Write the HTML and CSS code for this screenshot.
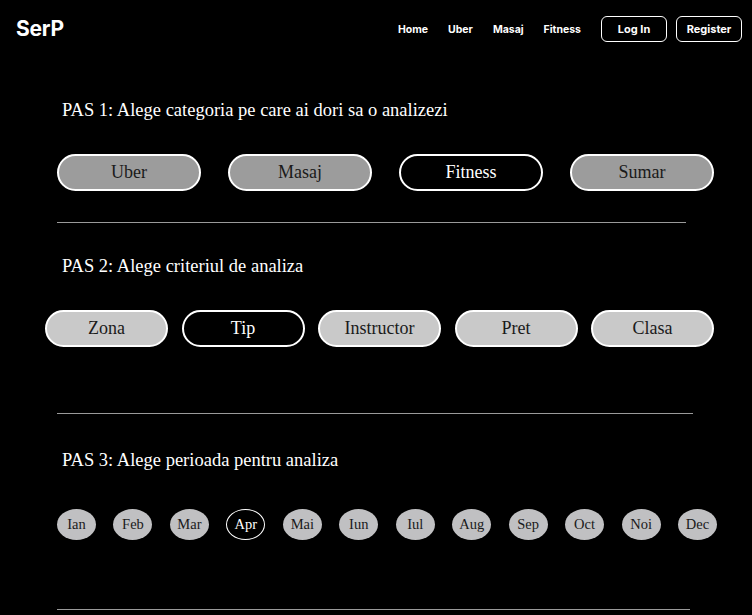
FILE: index.html
```html
<!DOCTYPE html>
<html lang="ro">
<head>
<meta charset="utf-8">
<title>SerP</title>
<link rel="stylesheet" href="styles.css">
</head>
<body>
<header class="topbar">
  <div class="logo">SerP</div>
  <nav class="nav">
    <a class="nav-link" href="#">Home</a>
    <a class="nav-link" href="#">Uber</a>
    <a class="nav-link" href="#">Masaj</a>
    <a class="nav-link" href="#">Fitness</a>
  </nav>
  <div class="auth">
    <a class="auth-btn" href="#">Log In</a>
    <a class="auth-btn" href="#">Register</a>
  </div>
</header>
<main class="content">
  <section class="step step-1">
    <h2 class="step-title">PAS 1: Alege categoria pe care ai dori sa o analizezi</h2>
    <div class="pills pills-cat">
      <button class="pill pill-cat">Uber</button>
      <button class="pill pill-cat">Masaj</button>
      <button class="pill pill-cat active">Fitness</button>
      <button class="pill pill-cat">Sumar</button>
    </div>
    <hr class="rule rule-1">
  </section>
  <section class="step step-2">
    <h2 class="step-title">PAS 2: Alege criteriul de analiza</h2>
    <div class="pills pills-crit">
      <button class="pill pill-crit">Zona</button>
      <button class="pill pill-crit active">Tip</button>
      <button class="pill pill-crit">Instructor</button>
      <button class="pill pill-crit">Pret</button>
      <button class="pill pill-crit">Clasa</button>
    </div>
    <hr class="rule rule-2">
  </section>
  <section class="step step-3">
    <h2 class="step-title">PAS 3: Alege perioada pentru analiza</h2>
    <div class="months">
      <button class="month">Ian</button>
      <button class="month">Feb</button>
      <button class="month">Mar</button>
      <button class="month active">Apr</button>
      <button class="month">Mai</button>
      <button class="month">Iun</button>
      <button class="month">Iul</button>
      <button class="month">Aug</button>
      <button class="month">Sep</button>
      <button class="month">Oct</button>
      <button class="month">Noi</button>
      <button class="month">Dec</button>
    </div>
    <hr class="rule rule-3">
  </section>
</main>
</body>
</html>
```

FILE: styles.css
```css
* { box-sizing: border-box; }
html, body {
  margin: 0;
  padding: 0;
  background: #000;
  color: #fff;
}
body {
  width: 752px;
  height: 615px;
  overflow: hidden;
  font-family: "Liberation Serif", "DejaVu Serif", serif;
}
.topbar {
  height: 58px;
  display: flex;
  align-items: center;
  padding: 0 10px 0 16px;
  font-family: Inter, "Liberation Sans", sans-serif;
}
.logo {
  font-size: 21px;
  font-weight: 700;
  letter-spacing: -0.2px;
  flex: 1;
  margin-top: -1px;
}
.nav {
  display: flex;
  gap: 20px;
  margin-right: 20px;
}
.nav-link {
  color: #fff;
  text-decoration: none;
  font-size: 10.5px;
  font-weight: 700;
}
.auth {
  display: flex;
  gap: 9px;
}
.auth-btn {
  width: 66px;
  height: 26px;
  border: 1.5px solid #fff;
  border-radius: 6px;
  color: #fff;
  text-decoration: none;
  font-size: 11px;
  font-weight: 700;
  display: flex;
  align-items: center;
  justify-content: center;
}
.content { display: block; }
.step-title {
  margin: 0;
  padding-left: 62px;
  font-weight: 400;
  font-size: 18.5px;
  line-height: 20px;
  height: 20px;
  white-space: nowrap;
}
.step-1 .step-title { margin-top: 42px; }
.step-2 .step-title { margin-top: 33px; }
.step-3 .step-title { margin-top: 36px; }
.pills {
  display: flex;
}
.pills-cat {
  margin-top: 34px;
  padding-left: 57px;
  gap: 27px;
}
.pills-crit {
  margin-top: 34px;
  padding-left: 45px;
  gap: 13.5px;
}
.pill {
  font-family: "Liberation Serif", "DejaVu Serif", serif;
  font-size: 18px;
  color: #1a1a1a;
  border: 2px solid #fff;
  border-radius: 19px;
  display: flex;
  align-items: center;
  justify-content: center;
  padding: 0;
  flex: none;
}
.pill-cat {
  width: 144px;
  height: 37px;
  background: #9c9c9c;
}
.pill-crit {
  width: 123px;
  height: 37px;
  background: #c9c9c9;
}
.pill.active {
  background: #000;
  color: #fff;
}
.rule {
  border: 0;
  height: 1px;
  background: #9a9a9a;
  margin: 0 0 0 57px;
}
.rule-1 { margin-top: 31px; width: 629px; }
.rule-2 { margin-top: 66px; width: 636px; }
.rule-3 { margin-top: 69px; width: 633px; }
.months {
  margin-top: 39px;
  margin-left: 57px;
  width: 660px;
  display: flex;
  justify-content: space-between;
}
.month {
  width: 39px;
  height: 31px;
  border-radius: 50%;
  border: 0;
  background: #c0c0c2;
  color: #1a1a1a;
  font-family: "Liberation Serif", "DejaVu Serif", serif;
  font-size: 14.5px;
  padding: 0;
  display: flex;
  align-items: center;
  justify-content: center;
  flex: none;
}
.month.active {
  background: #000;
  color: #fff;
  border: 1px solid #fff;
}
```
